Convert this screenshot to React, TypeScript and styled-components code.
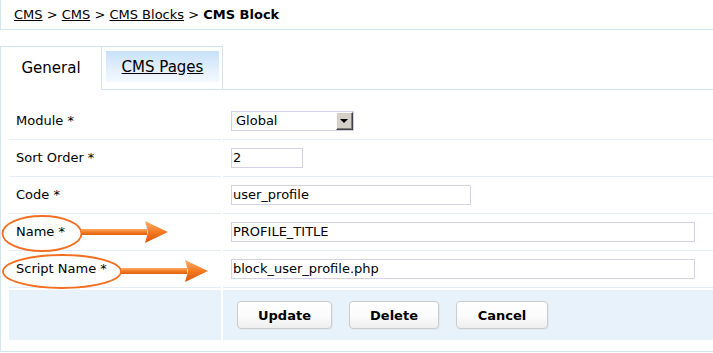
import React from "react";
import styled, { createGlobalStyle } from "styled-components";

const GlobalStyle = createGlobalStyle`
  html, body { margin: 0; padding: 0; background: #ffffff; overflow: hidden; }
  body {
    font-family: "DejaVu Sans", Verdana, sans-serif;
    font-size: 13px;
    color: #000000;
  }
  * { box-sizing: border-box; }
`;

const Page = styled.div`
  position: relative;
  width: 713px;
  height: 353px;
`;

const Breadcrumb = styled.div`
  height: 30px;
  display: flex;
  align-items: center;
  padding-left: 13px;
  padding-bottom: 1px;
  border-left: 1px solid #d3e4ed;
  border-bottom: 1px solid #d3e4ed;
  margin-bottom: 16px;
  white-space: pre;
`;

const CrumbLink = styled.a`
  color: #000;
  text-decoration: underline;
  cursor: pointer;
`;

const CrumbSep = styled.span`
  color: #000;
`;

const CrumbCurrent = styled.b`
  font-weight: bold;
`;

const TabBar = styled.div`
  display: flex;
  height: 44px;
`;

const ActiveTab = styled.div`
  width: 102px;
  border: 1px solid #d3e4ed;
  border-bottom: none;
  background: #fff;
  display: flex;
  align-items: center;
  justify-content: center;
  font-size: 15px;
  padding-bottom: 1px;
`;

const Tab = styled.div`
  width: 121px;
  border-top: 1px solid #d3e4ed;
  border-right: 1px solid #d3e4ed;
  border-bottom: 1px solid #d3e4ed;
  padding: 4px 3px 7px 4px;
  display: flex;
`;

const TabInner = styled.a`
  flex: 1;
  display: flex;
  align-items: center;
  justify-content: center;
  background: linear-gradient(to bottom, #c6e1fa 0%, #e4f0fc 60%, #f4f9fe 100%);
  color: #000;
  text-decoration: underline;
  font-size: 15px;
  cursor: pointer;
`;

const TabFiller = styled.div`
  flex: 1;
  border-bottom: 1px solid #d3e4ed;
`;

const Body = styled.div`
  border-left: 1px solid #d3e4ed;
  border-bottom: 1px solid #d3e4ed;
  padding: 13px 0 11px 8px;
`;

const Row = styled.div`
  display: grid;
  grid-template-columns: 212px 1fr;
  column-gap: 2px;
`;

const LabelCell = styled.div`
  height: 37px;
  border-bottom: 1px solid #e5eef6;
  display: flex;
  align-items: center;
  padding-left: 7px;
  padding-bottom: 1px;
`;

const ValueCell = styled.div`
  height: 37px;
  border-bottom: 1px solid #e5eef6;
  display: flex;
  align-items: center;
  padding-left: 8px;
  padding-bottom: 1px;
`;

const ButtonRow = styled.div`
  display: grid;
  grid-template-columns: 212px 1fr;
  column-gap: 2px;
  margin-top: 2px;
`;

const ButtonBg = styled.div`
  height: 50px;
  background: #e8f2fb;
  display: flex;
  align-items: center;
  gap: 17px;
  padding-left: 14px;
`;

const TextInput = styled.input<{ $w: number }>`
  width: ${(p) => p.$w}px;
  height: 20px;
  border: 1px solid #d4d0e7;
  padding: 0 1px;
  font-family: "DejaVu Sans", Verdana, sans-serif;
  font-size: 13px;
  color: #000;
  background: #fff;
  outline: none;
`;

const SelectBox = styled.div`
  width: 123px;
  height: 20px;
  border: 1px solid #d4d0e7;
  display: flex;
  align-items: stretch;
  background: #fff;
`;

const SelectText = styled.span`
  flex: 1;
  display: flex;
  align-items: center;
  padding-left: 4px;
`;

const SelectArrow = styled.span`
  width: 17px;
  margin: 0 0 0 0;
  background: #d4d0c8;
  border-top: 1px solid #ffffff;
  border-left: 1px solid #ffffff;
  border-right: 1px solid #404040;
  border-bottom: 1px solid #404040;
  box-shadow: inset -1px -1px 0 #808080;
  display: flex;
  align-items: center;
  justify-content: center;
  &::after {
    content: "";
    width: 0;
    height: 0;
    border-left: 4px solid transparent;
    border-right: 4px solid transparent;
    border-top: 4px solid #000;
    margin-right: 1px;
  }
`;

const Button = styled.button<{ $w: number }>`
  width: ${(p) => p.$w}px;
  height: 28px;
  border: 1px solid #cccccc;
  border-radius: 4px;
  background: linear-gradient(to bottom, #ffffff 0%, #fbfbfb 55%, #eeeeee 100%);
  box-shadow: 1px 1px 0 rgba(0, 0, 0, 0.04);
  font-family: "DejaVu Sans", Verdana, sans-serif;
  font-size: 13px;
  font-weight: bold;
  color: #000;
  padding: 0;
  cursor: pointer;
`;

const Overlay = styled.svg`
  position: absolute;
  left: 0;
  top: 0;
  pointer-events: none;
`;

function Arrow({ x1, x2, y }: { x1: number; x2: number; y: number }) {
  const headBack = x2 - 23;
  return (
    <g>
      <rect x={x1} y={y - 3} width={headBack - x1 + 2} height={6} fill="url(#shaftGrad)" />
      <polygon
        points={`${headBack},${y - 11} ${x2},${y} ${headBack},${y + 11} ${headBack + 3},${y}`}
        fill="url(#headGrad)"
      />
    </g>
  );
}

const fields: { label: string; kind: "select" | "input"; value: string; w: number }[] = [
  { label: "Module *", kind: "select", value: "Global", w: 123 },
  { label: "Sort Order *", kind: "input", value: "2", w: 72 },
  { label: "Code *", kind: "input", value: "user_profile", w: 240 },
  { label: "Name *", kind: "input", value: "PROFILE_TITLE", w: 464 },
  { label: "Script Name *", kind: "input", value: "block_user_profile.php", w: 464 },
];

export default function App() {
  return (
    <Page>
      <GlobalStyle />
      <Breadcrumb>
        <CrumbLink>CMS</CrumbLink>
        <CrumbSep>{" > "}</CrumbSep>
        <CrumbLink>CMS</CrumbLink>
        <CrumbSep>{" > "}</CrumbSep>
        <CrumbLink>CMS Blocks</CrumbLink>
        <CrumbSep>{" > "}</CrumbSep>
        <CrumbCurrent>CMS Block</CrumbCurrent>
      </Breadcrumb>
      <TabBar>
        <ActiveTab>General</ActiveTab>
        <Tab>
          <TabInner>CMS Pages</TabInner>
        </Tab>
        <TabFiller />
      </TabBar>
      <Body>
        {fields.map((f) => (
          <Row key={f.label}>
            <LabelCell>{f.label}</LabelCell>
            <ValueCell>
              {f.kind === "select" ? (
                <SelectBox>
                  <SelectText>{f.value}</SelectText>
                  <SelectArrow />
                </SelectBox>
              ) : (
                <TextInput $w={f.w} defaultValue={f.value} />
              )}
            </ValueCell>
          </Row>
        ))}
        <ButtonRow>
          <ButtonBg />
          <ButtonBg>
            <Button $w={95}>Update</Button>
            <Button $w={90}>Delete</Button>
            <Button $w={92}>Cancel</Button>
          </ButtonBg>
        </ButtonRow>
      </Body>
      <Overlay width={713} height={353} viewBox="0 0 713 353">
        <defs>
          <linearGradient id="shaftGrad" x1="0" y1="0" x2="0" y2="1">
            <stop offset="0" stopColor="#fbab66" />
            <stop offset="0.5" stopColor="#f37c25" />
            <stop offset="1" stopColor="#e0600f" />
          </linearGradient>
          <linearGradient id="headGrad" x1="0" y1="0" x2="0" y2="1">
            <stop offset="0" stopColor="#fcb06c" />
            <stop offset="0.5" stopColor="#f47a22" />
            <stop offset="1" stopColor="#d9560a" />
          </linearGradient>
        </defs>
        <ellipse cx={42} cy={233.5} rx={39.5} ry={17.5} fill="none" stroke="#f26f21" strokeWidth={1.8} />
        <ellipse cx={62} cy={271.5} rx={59} ry={16.5} fill="none" stroke="#f26f21" strokeWidth={1.8} />
        <Arrow x1={81} x2={168} y={232} />
        <Arrow x1={121} x2={208} y={271} />
      </Overlay>
    </Page>
  );
}
